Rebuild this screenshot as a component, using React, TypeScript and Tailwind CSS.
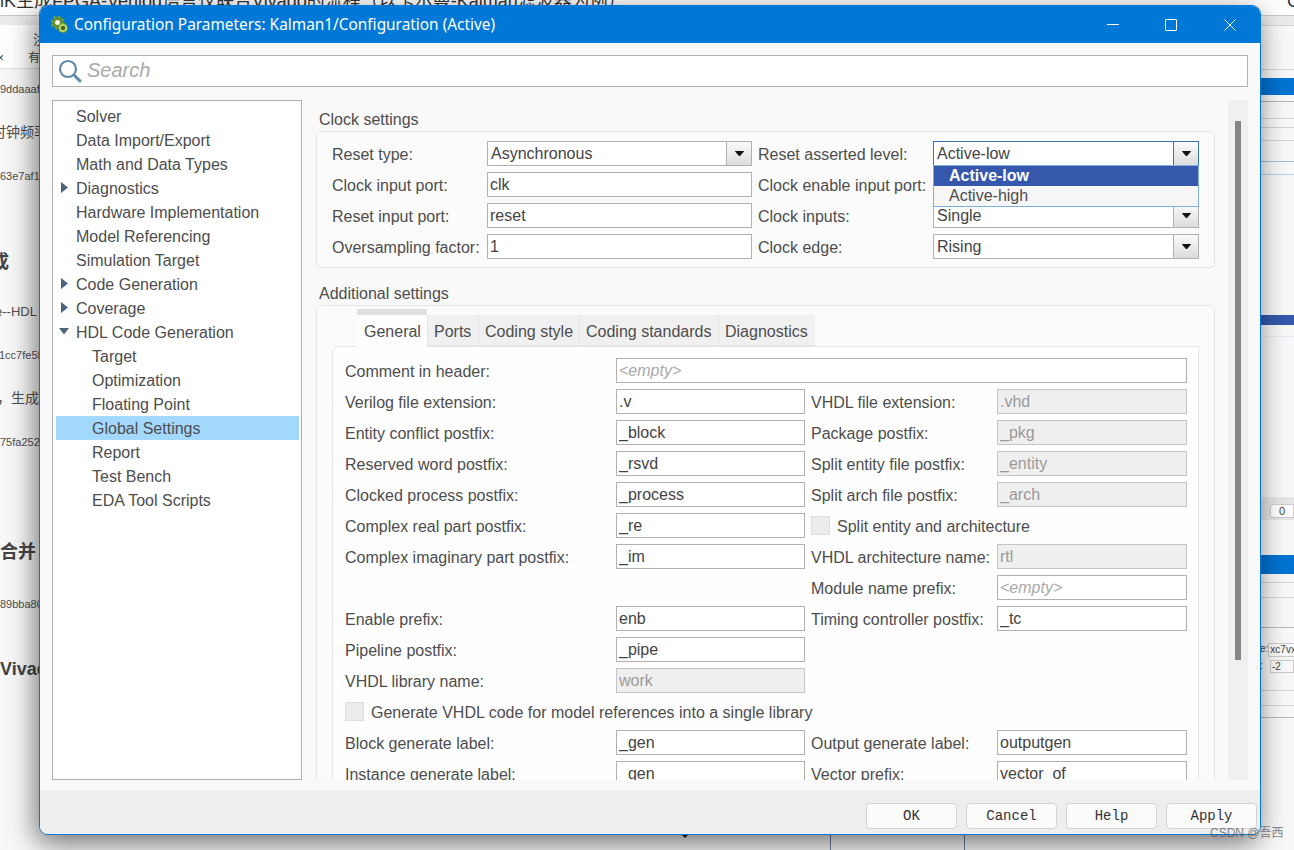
import { clsx } from "clsx";

const treeItems = [
  { label: "Solver", level: 0 },
  { label: "Data Import/Export", level: 0 },
  { label: "Math and Data Types", level: 0 },
  { label: "Diagnostics", level: 0, arrow: "right" },
  { label: "Hardware Implementation", level: 0 },
  { label: "Model Referencing", level: 0 },
  { label: "Simulation Target", level: 0 },
  { label: "Code Generation", level: 0, arrow: "right" },
  { label: "Coverage", level: 0, arrow: "right" },
  { label: "HDL Code Generation", level: 0, arrow: "down" },
  { label: "Target", level: 1 },
  { label: "Optimization", level: 1 },
  { label: "Floating Point", level: 1 },
  { label: "Global Settings", level: 1, selected: true },
  { label: "Report", level: 1 },
  { label: "Test Bench", level: 1 },
  { label: "EDA Tool Scripts", level: 1 },
];

const tabs = [
  { label: "General", width: "w-[70px]", active: true },
  { label: "Ports", width: "w-[51px]" },
  { label: "Coding style", width: "w-[101px]" },
  { label: "Coding standards", width: "w-[139px]" },
  { label: "Diagnostics", width: "w-[97px]" },
];

function Arrow() {
  return (
    <svg width="9" height="6" viewBox="0 0 9 6">
      <path d="M0.5 0.5H8.5L4.5 5Z" fill="#111" stroke="#111" strokeLinejoin="round" />
    </svg>
  );
}

function Field({ value, disabled, placeholder }: { value?: string; disabled?: boolean; placeholder?: string }) {
  return (
    <input
      readOnly
      value={value ?? ""}
      placeholder={placeholder}
      className={clsx(
        "block h-[25px] w-full border px-[2px] text-[16px] outline-none placeholder:italic placeholder:text-[#aaaaaa]",
        disabled ? "border-[#c4c4c4] bg-[#efefef] text-[#9a9a9a]" : "border-[#b0b0b0] bg-white text-[#444444]",
      )}
    />
  );
}

function Select({ value, focused }: { value: string; focused?: boolean }) {
  return (
    <div className={clsx("flex h-[25px] w-full border bg-white", focused ? "border-[#3a72b4]" : "border-[#b0b0b0]")}>
      <div className="flex-1 pl-[3px] text-[16px] leading-[23px] text-[#444444]">{value}</div>
      <div
        className={clsx(
          "flex w-[25px] items-center justify-center border-l bg-gradient-to-b from-[#fbfbfb] to-[#dcdcdc]",
          focused ? "border-[#3a72b4]" : "border-[#b0b0b0]",
        )}
      >
        <Arrow />
      </div>
    </div>
  );
}

function Label({ children, right }: { children: string; right?: boolean }) {
  return (
    <div className={clsx("flex h-[25px] items-center whitespace-nowrap pt-[2px] text-[16px] text-[#4d4d4d]", right && "pl-[6px]")}>
      {children}
    </div>
  );
}

function Check({ children }: { children: string }) {
  return (
    <div className="flex h-[25px] items-center gap-[7px] whitespace-nowrap text-[16px] text-[#4d4d4d]">
      <span className="h-[19px] w-[19px] border border-[#dddddd] bg-[#ececec]" />
      <span className="pt-[2px]">{children}</span>
    </div>
  );
}

function TreeArrow({ dir }: { dir: string }) {
  return dir === "down" ? (
    <svg width="10" height="7" viewBox="0 0 10 7" className="absolute left-[3px] top-[8px]">
      <path d="M0 0H10L5 6.5Z" fill="#4c6379" />
    </svg>
  ) : (
    <svg width="7" height="11" viewBox="0 0 7 11" className="absolute left-[5px] top-[6px]">
      <path d="M0 0L7 5.5L0 11Z" fill="#4c6379" />
    </svg>
  );
}

function Tree() {
  return (
    <div className="h-[680px] w-[250px] shrink-0 border border-[#aeaeae] bg-white pl-[3px] pr-[2px] pt-[3px]">
      {treeItems.map((item) => (
        <div
          key={item.label}
          className={clsx(
            "relative h-[24px] pt-[1px] text-[16px] leading-[24px] text-[#4d4d4d]",
            item.level === 0 ? "pl-[20px]" : "pl-[36px]",
            item.selected && "bg-[#a3d8ff]",
          )}
        >
          {item.arrow && <TreeArrow dir={item.arrow} />}
          {item.label}
        </div>
      ))}
    </div>
  );
}

function ClockSettings() {
  return (
    <div className="grid w-[899px] grid-cols-[155px_265px_181px_266px] gap-y-[6px] rounded-[5px] border border-[#e6e6e6] bg-[#fbfbfb] pb-[8px] pl-[15px] pt-[9px]">
      <Label>Reset type:</Label>
      <Select value="Asynchronous" />
      <Label right>Reset asserted level:</Label>
      <div className="relative">
        <Select value="Active-low" focused />
        <div className="absolute left-0 top-[24px] z-10 w-full border border-[#7eb0d8] bg-[#f6f6f6] text-[16px] leading-[20px]">
          <div className="h-[20px] bg-[#3558ad] pl-[15px] font-bold text-white">Active-low</div>
          <div className="h-[20px] pl-[15px] text-[#4d4d4d]">Active-high</div>
        </div>
      </div>
      <Label>Clock input port:</Label>
      <Field value="clk" />
      <Label right>Clock enable input port:</Label>
      <div />
      <Label>Reset input port:</Label>
      <Field value="reset" />
      <Label right>Clock inputs:</Label>
      <Select value="Single" />
      <Label>Oversampling factor:</Label>
      <Field value="1" />
      <Label right>Clock edge:</Label>
      <Select value="Rising" />
    </div>
  );
}

function GeneralForm() {
  return (
    <div className="grid w-[867px] grid-cols-[271px_189px_192px_190px] gap-y-[6px] rounded-tl-[5px] border border-[#e6e6e6] bg-[#fefefe] pb-[10px] pl-[12px] pt-[11px]">
      <Label>Comment in header:</Label>
      <div className="col-span-3">
        <Field placeholder="<empty>" />
      </div>

      <Label>Verilog file extension:</Label>
      <Field value=".v" />
      <Label right>VHDL file extension:</Label>
      <Field value=".vhd" disabled />

      <Label>Entity conflict postfix:</Label>
      <Field value="_block" />
      <Label right>Package postfix:</Label>
      <Field value="_pkg" disabled />

      <Label>Reserved word postfix:</Label>
      <Field value="_rsvd" />
      <Label right>Split entity file postfix:</Label>
      <Field value="_entity" disabled />

      <Label>Clocked process postfix:</Label>
      <Field value="_process" />
      <Label right>Split arch file postfix:</Label>
      <Field value="_arch" disabled />

      <Label>Complex real part postfix:</Label>
      <Field value="_re" />
      <div className="col-span-2 pl-[6px]">
        <Check>Split entity and architecture</Check>
      </div>

      <Label>Complex imaginary part postfix:</Label>
      <Field value="_im" />
      <Label right>VHDL architecture name:</Label>
      <Field value="rtl" disabled />

      <div />
      <div />
      <Label right>Module name prefix:</Label>
      <Field placeholder="<empty>" />

      <Label>Enable prefix:</Label>
      <Field value="enb" />
      <Label right>Timing controller postfix:</Label>
      <Field value="_tc" />

      <Label>Pipeline postfix:</Label>
      <Field value="_pipe" />
      <div className="col-span-2" />

      <Label>VHDL library name:</Label>
      <Field value="work" disabled />
      <div className="col-span-2" />

      <div className="col-span-4">
        <Check>Generate VHDL code for model references into a single library</Check>
      </div>

      <Label>Block generate label:</Label>
      <Field value="_gen" />
      <Label right>Output generate label:</Label>
      <Field value="outputgen" />

      <Label>Instance generate label:</Label>
      <Field value="_gen" />
      <Label right>Vector prefix:</Label>
      <Field value="vector_of" />
    </div>
  );
}

function SettingsPane() {
  return (
    <div className="h-[680px] w-[926px] shrink-0 overflow-hidden pl-[14px] pt-[9px]">
      <div className="h-[20px] pl-[3px] pt-[1px] text-[16px] leading-[20px] text-[#4d4d4d]">Clock settings</div>
      <div className="mt-[2px]">
        <ClockSettings />
      </div>
      <div className="mt-[15px] h-[20px] pl-[3px] pt-[1px] text-[16px] leading-[20px] text-[#4d4d4d]">Additional settings</div>
      <div className="mt-[2px] w-[899px] rounded-[5px] border border-[#e6e6e6] bg-[#fbfbfb] pb-[10px] pl-[15px] pt-[3px]">
        <div className="relative z-[1] ml-[25px] flex h-[37px] items-start">
          {tabs.map((tab) => (
            <div
              key={tab.label}
              className={clsx(
                "flex items-center whitespace-nowrap text-[16px] text-[#4d4d4d]",
                tab.width,
                tab.active
                  ? "h-[38px] border-t-[6px] border-[#e0e0e0] bg-[#fefefe] pl-[7px] pt-[2px]"
                  : "mt-[6px] h-[31px] border-b border-l border-[#e6e6e6] bg-[#f0f0f0] pl-[6px] pt-[4px]",
              )}
            >
              {tab.label}
            </div>
          ))}
        </div>
        <GeneralForm />
      </div>
    </div>
  );
}

function GearIcon() {
  return (
    <svg width="17" height="17" viewBox="0 0 17 17">
      <circle cx="6.5" cy="6.5" r="4" fill="#f4f6e6" stroke="#5f8f2e" strokeWidth="3" />
      <circle cx="6.5" cy="6.5" r="5.8" fill="none" stroke="#6f9f34" strokeWidth="2.4" strokeDasharray="2.4 2.1" />
      <circle cx="12" cy="12" r="3.4" fill="#3f6b22" stroke="#cbdc5e" strokeWidth="2.2" />
      <circle cx="12" cy="12" r="4.6" fill="none" stroke="#5f8f2e" strokeWidth="1.6" strokeDasharray="1.8 1.8" />
    </svg>
  );
}

function ConfigWindow() {
  return (
    <div className="absolute left-[39px] top-[5px] flex h-[830px] w-[1222px] flex-col overflow-hidden rounded-[9px] border border-[#0078d7] bg-[#f9f9f9] shadow-[-3px_8px_28px_rgba(0,0,0,0.55)]">
      <div className="flex h-[37px] shrink-0 items-center bg-[#0078d7] pl-[11px] text-white">
        <GearIcon />
        <span className="ml-[6px] whitespace-nowrap font-['Noto_Sans',sans-serif] text-[15.4px]">
          Configuration Parameters: Kalman1/Configuration (Active)
        </span>
        <div className="ml-auto flex items-center pr-[24px]">
          <span className="h-px w-[12px] bg-white" />
          <span className="ml-[46px] h-[12px] w-[12px] rounded-[1px] border border-white" />
          <svg width="12" height="12" viewBox="0 0 12 12" className="ml-[47px]">
            <path d="M0.5 0.5L11.5 11.5M11.5 0.5L0.5 11.5" stroke="#ffffff" strokeWidth="1" />
          </svg>
        </div>
      </div>

      <div className="flex-1 px-[12px] pt-[12px]">
        <div className="flex h-[32px] w-[1196px] items-center border border-[#b0b0b0] bg-white pl-[5px]">
          <svg width="24" height="24" viewBox="0 0 24 24">
            <circle cx="10" cy="10" r="8" fill="none" stroke="#5f88ad" strokeWidth="2.2" />
            <path d="M16 16L22 22" stroke="#5f88ad" strokeWidth="3" strokeLinecap="round" />
          </svg>
          <span className="mb-[2px] ml-[5px] text-[20px] italic text-[#aaaaaa]">Search</span>
        </div>
        <div className="mt-[13px] flex">
          <Tree />
          <SettingsPane />
          <div className="h-[680px] w-[20px] bg-[#f0f0f0] pl-[7px] pt-[21px]">
            <div className="h-[539px] w-[6px] bg-[#858585]" />
          </div>
        </div>
      </div>

      <div className="flex h-[44px] shrink-0 justify-end gap-[9px] bg-[#eeeeee] pr-[3px] pt-[13px]">
        {["OK", "Cancel", "Help", "Apply"].map((label) => (
          <div
            key={label}
            className="flex h-[26px] w-[91px] items-center justify-center rounded-[4px] border border-[#d2d2d2] bg-[#fbfbfb] font-['Liberation_Mono',monospace] text-[14px] text-[#333333]"
          >
            {label}
          </div>
        ))}
      </div>
    </div>
  );
}

function LeftStrip() {
  const hash = "h-[20px] whitespace-nowrap text-[11px] leading-[20px] text-[#4d4d4d]";
  const cjk = "h-[20px] whitespace-nowrap text-[14px] leading-[20px] text-[#4d4d4d]";
  const bold = "h-[20px] whitespace-nowrap text-[18px] font-bold leading-[20px] text-[#444444]";
  return (
    <div className="w-[40px] overflow-hidden">
      <div className="flex h-[44px] flex-col items-end border-b border-[#dddddd] bg-white pt-[7px] text-[12px] text-[#444444]">
        <span className="-mr-[6px] text-[13px] leading-[16px]">注</span>
        <span className="mt-[2px] flex w-full justify-between leading-[16px]">
          <span className="-ml-[3px]">×</span>
          <span>有</span>
        </span>
      </div>
      <div className={clsx(hash, "mt-[10px]")}>9ddaaaf</div>
      <div className={clsx(cjk, "-ml-[8px] mt-[23px]")}>时钟频率</div>
      <div className={clsx(hash, "mt-[24px]")}>63e7af1</div>
      <div className={clsx(bold, "-ml-[9px] mt-[66px]")}>成</div>
      <div className="-ml-[5px] mt-[30px] h-[20px] whitespace-nowrap text-[13px] leading-[20px] text-[#4d4d4d]">e--HDL</div>
      <div className={clsx(hash, "-ml-[1px] mt-[23px]")}>1cc7fe5f</div>
      <div className={clsx(cjk, "-ml-[3px] mt-[23px]")}>，生成</div>
      <div className={clsx(hash, "mt-[24px]")}>75fa252</div>
      <div className={clsx(bold, "mt-[90px]")}>合并</div>
      <div className={clsx(hash, "mt-[32px]")}>89bba80</div>
      <div className={clsx(bold, "mt-[45px]")}>Vivado</div>
    </div>
  );
}

function RightStrip() {
  const line = "h-px bg-[#d4d4d4]";
  return (
    <div className="w-[34px] overflow-hidden">
      <div className={line} />
      <div className={clsx(line, "mt-[43px]")} />
      <div className="mt-[8px] h-[17px] bg-[#0073d2]" />
      <div className="mt-[6px] h-px bg-[#b4b4b4]" />
      <div className={clsx(line, "mt-[16px]")} />
      <div className={clsx(line, "mt-[8px]")} />
      <div className={clsx(line, "mt-[12px]")} />
      <div className="mt-[20px] h-px bg-[#a9bdd6]" />
      <div className="mt-[12px] h-px bg-[#bcd3ea]" />
      <div className="mt-[140px] h-[10px] bg-[#3558ad]" />
      <div className="mt-[11px] h-px bg-[#e8ecf2]" />
      <div className="mt-[160px] h-[23px] bg-[#e6e6e6] pl-[10px] pt-[7px]">
        <div className="h-[14px] rounded-l-[3px] border border-[#cccccc] bg-white pl-[8px] text-[11px] leading-[12px] text-[#444444]">
          0
        </div>
      </div>
      <div className="mt-[35px] h-[19px] bg-[#0073d2]" />
      <div className={clsx(line, "mt-[8px]")} />
      <div className={clsx(line, "mt-[14px]")} />
      <div className="mt-[29px] h-px bg-[#b8b8b8]" />
      <div className="mt-[15px] flex h-[14px] text-[10px] leading-[12px] text-[#444444]">
        <span className="w-[10px]">e:</span>
        <span className="flex-1 border border-[#cccccc] pl-[1px]">xc7vx</span>
      </div>
      <div className="mt-[3px] flex h-[13px] text-[10px] leading-[11px] text-[#444444]">
        <span className="w-[10px]">:</span>
        <span className="flex-1 border border-[#cccccc] pl-[1px]">-2</span>
      </div>
      <div className={clsx(line, "mt-[17px]")} />
      <div className={clsx(line, "mt-[14px]")} />
      <div className="mt-[11px] h-px bg-[#b8b8b8]" />
    </div>
  );
}

export default function App() {
  return (
    <div className="relative flex h-[850px] w-[1294px] flex-col overflow-hidden bg-[#f8f8f8] font-['Liberation_Sans','Noto_Sans_CJK_SC',sans-serif]">
      <div className="h-[16px] shrink-0 overflow-hidden border-b border-[#c8c8c8] bg-white">
        <div className="-mt-[9px] flex justify-between whitespace-nowrap text-[18px] leading-[20px] text-[#333333]">
          <span>lK生成FPGA-Verilog语言仅联合Vivado的流程（以卡尔曼-Kalman滤波器为例）</span>
          <span className="mr-[-6px]">C</span>
        </div>
      </div>
      <div className="h-[9px] shrink-0 bg-[#ebebeb]" />
      <div className="flex flex-1 justify-between overflow-hidden">
        <LeftStrip />
        <RightStrip />
      </div>
      <div className="flex h-[16px] shrink-0">
        <div className="ml-[674px] w-[151px] pl-[7px] leading-[0]">
          <svg width="8" height="4" viewBox="0 0 8 4">
            <path d="M4 4L0 0H8Z" fill="#222222" />
          </svg>
        </div>
        <div className="ml-[5px] w-px bg-[#6d7f9c]" />
        <div className="ml-[133px] w-px bg-[#6d7f9c]" />
      </div>

      <ConfigWindow />

      <div className="absolute left-[1210px] top-[826px] text-[12px] leading-[14px] text-[#555555] opacity-70">
        CSDN @吾西
      </div>
    </div>
  );
}
